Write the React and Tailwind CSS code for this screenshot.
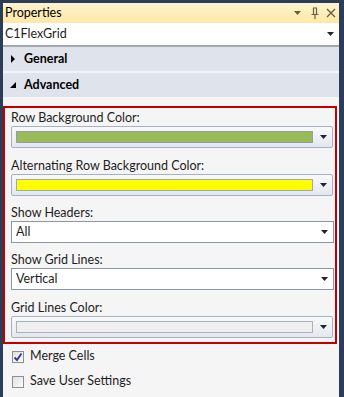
const font = { fontFamily: 'Lato, "Noto Sans", sans-serif' };

function Arrow({ className = "" }) {
  return (
    <svg width="7" height="4" viewBox="0 0 7 4" className={className}>
      <path d="M0 0 H7 L3.5 4 Z" fill="#1b2435" />
    </svg>
  );
}

function ColorCombo({ color, border }) {
  return (
    <div className="h-[22px] mr-[2px] rounded-[2px] border border-[#a9b1bd] bg-gradient-to-b from-[#f8f9fa] to-[#e4e8ee] flex items-center pl-[4px] pr-[5px]">
      <div className="flex-1 h-[12px] border" style={{ backgroundColor: color, borderColor: border }} />
      <Arrow className="ml-[7px]" />
    </div>
  );
}

function Select({ value }) {
  return (
    <div className="h-[22px] mr-[1px] border border-[#8c96a8] bg-white flex items-center pl-[4px] pr-[5px] text-[12.5px] text-[#1e1e1e]">
      <span className="flex-1">{value}</span>
      <Arrow />
    </div>
  );
}

function Label({ children, className = "" }) {
  return <div className={`h-[16px] leading-[16px] text-[12.5px] text-[#1e1e1e] ${className}`}>{children}</div>;
}

function Check({ checked, label }) {
  return (
    <div className="h-[25px] flex items-center pl-[9px]">
      <div className="w-[12px] h-[12px] border border-[#8f8f8f] bg-gradient-to-br from-[#e0e0e0] to-[#fcfcfc] flex items-center justify-center">
        {checked && (
          <svg width="10" height="10" viewBox="0 0 10 10">
            <path d="M1.5 5.5 L4 8 L8.5 1.5" fill="none" stroke="#2c3c8c" strokeWidth="1.8" />
          </svg>
        )}
      </div>
      <span className="ml-[6px] text-[12.5px] text-[#1e1e1e]">{label}</span>
    </div>
  );
}

export default function App() {
  return (
    <div className="w-[344px] h-[397px] bg-[#2c3d5a] pt-[3px] pl-[3px] pr-[5px] overflow-hidden" style={font}>
      <div className="h-full bg-[#f5f5f5] flex flex-col">
        {/* title bar */}
        <div className="h-[20px] bg-gradient-to-b from-[#fff3cf] to-[#ffe8a6] flex items-center pl-[2px] pr-[3px]">
          <span className="flex-1 text-[12.5px] text-black">Properties</span>
          <svg width="8" height="4" viewBox="0 0 8 4" className="mr-[9px]">
            <path d="M0 0 H7 L3.5 4 Z" fill="#6b5e3a" />
          </svg>
          <svg width="8" height="12" viewBox="0 0 8 12" className="mr-[7px]">
            <path d="M2 1 H6 M2.5 1 V7 M5.5 1 V7 M0.5 7.5 H7.5 M4 8 V12" fill="none" stroke="#6b5e3a" strokeWidth="1.2" />
          </svg>
          <svg width="10" height="10" viewBox="0 0 10 10">
            <path d="M1 1 L9 9 M9 1 L1 9" stroke="#6b5e3a" strokeWidth="1.4" />
          </svg>
        </div>
        {/* object combo */}
        <div className="h-[24px] bg-white border-b-2 border-[#a3a7b0] flex items-center pl-[2px] pr-[5px]">
          <span className="flex-1 text-[12.5px] text-[#1e1e1e]">C1FlexGrid</span>
          <Arrow />
        </div>
        {/* category headers */}
        <div className="h-[24px] bg-[#dfe3ec] flex items-center pl-[7px]">
          <svg width="6" height="8" viewBox="0 0 6 8">
            <path d="M1 0 L5 4 L1 8 Z" fill="#000" />
          </svg>
          <span className="ml-[8px] text-[12.5px] font-bold text-black">General</span>
        </div>
        <div className="h-[2px] bg-[#f2f3f6]" />
        <div className="h-[24px] bg-[#dfe3ec] flex items-center pl-[7px]">
          <svg width="6" height="6" viewBox="0 0 6 6">
            <path d="M6 0 L6 6 L0 6 Z" fill="#000" />
          </svg>
          <span className="ml-[8px] text-[12.5px] font-bold text-black">Advanced</span>
        </div>
        {/* highlighted properties */}
        <div className="mt-[9px] mr-[2px] border-2 border-[#c00000] pl-[6px] pt-[2px] pb-[4px]">
          <Label>Row Background Color:</Label>
          <ColorCombo color="#9bbb59" border="#8fa0a8" />
          <Label className="mt-[10px]">Alternating Row Background Color:</Label>
          <ColorCombo color="#ffff00" border="#a0a8b0" />
          <Label className="mt-[9px]">Show Headers:</Label>
          <Select value="All" />
          <Label className="mt-[9px]">Show Grid Lines:</Label>
          <Select value="Vertical" />
          <Label className="mt-[10px]">Grid Lines Color:</Label>
          <ColorCombo color="#efefef" border="#a9b1bd" />
        </div>
        <div>
          <Check checked label="Merge Cells" />
          <Check label="Save User Settings" />
        </div>
      </div>
    </div>
  );
}
